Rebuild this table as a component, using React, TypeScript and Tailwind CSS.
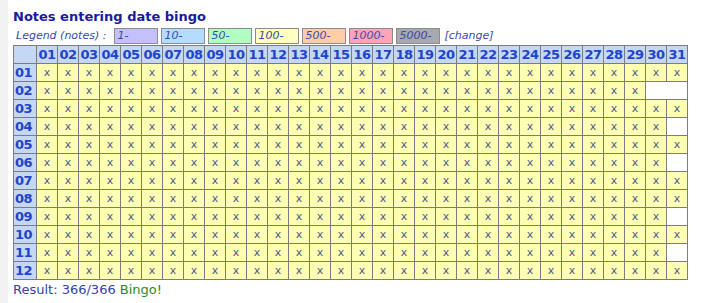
const days = Array.from({ length: 31 }, (_, i) => String(i + 1).padStart(2, "0"));
const months = Array.from({ length: 12 }, (_, i) => String(i + 1).padStart(2, "0"));

// days per month in a leap year
const monthDays = [31, 29, 31, 30, 31, 30, 31, 31, 30, 31, 30, 31];

const legend = [
  { label: "1-", cls: "bg-[#c4c0ff]" },
  { label: "10-", cls: "bg-[#b4dcff]" },
  { label: "50-", cls: "bg-[#b0ffc0]" },
  { label: "100-", cls: "bg-[#ffffc0]" },
  { label: "500-", cls: "bg-[#ffcca8]" },
  { label: "1000-", cls: "bg-[#ffa4b4]" },
  { label: "5000-", cls: "bg-[#a8a8b0]" },
];

export default function App() {
  return (
    <div className="flex h-[303px] w-[702px] bg-white font-['DejaVu_Sans',Verdana,sans-serif]">
      <div className="w-[8px] shrink-0 bg-[#f2f2f2]" />
      <div className="pl-[5px] pt-[9px]">
        <h1 className="text-[13px] font-bold leading-[16px] text-[#1a1aa0]">Notes entering date bingo</h1>
        <div className="mt-[3px] flex items-center gap-[3px] pl-[3px] text-[11px] italic leading-[14px] text-[#3a4aa8]">
          <span className="mr-[5px]">Legend (notes) :</span>
          {legend.map((l) => (
            <span
              key={l.label}
              className={`h-[16px] w-[44px] border border-[#8c8c8c] pl-[2px] leading-[14px] ${l.cls}`}
            >
              {l.label}
            </span>
          ))}
          <span className="ml-[1px]">[change]</span>
        </div>
        <table className="mt-[1px] border-collapse">
          <thead>
            <tr className="h-[18px]">
              <th className="w-[23px] border border-[#7c7c7c] bg-[#c4d8f4]" />
              {days.map((d) => (
                <th
                  key={d}
                  className="w-[21px] border border-[#7c7c7c] bg-[#c4d8f4] p-0 text-center text-[13px] font-bold leading-[16px] tracking-[-0.5px] text-[#2244c8]"
                >
                  {d}
                </th>
              ))}
            </tr>
          </thead>
          <tbody>
            {months.map((m, mi) => (
              <tr key={m} className="h-[18px]">
                <th className="border border-[#7c7c7c] bg-[#c4d8f4] p-0 pl-[1px] text-left text-[13px] font-bold leading-[16px] tracking-[-0.5px] text-[#2244c8]">
                  {m}
                </th>
                {days.slice(0, monthDays[mi]).map((d) => (
                  <td
                    key={d}
                    className="border border-[#7c7c7c] bg-[#ffffb4] p-0 text-center text-[11px] leading-[16px] text-[#4c5a8c]"
                  >
                    x
                  </td>
                ))}
                {monthDays[mi] < 31 && (
                  <td colSpan={31 - monthDays[mi]} className="border border-[#7c7c7c] bg-white p-0" />
                )}
              </tr>
            ))}
          </tbody>
        </table>
        <p className="mt-[1px] text-[13px] leading-[17px] text-[#3344aa]">
          Result: 366/366 <span className="text-[#2a8a2a]">Bingo!</span>
        </p>
      </div>
    </div>
  );
}
